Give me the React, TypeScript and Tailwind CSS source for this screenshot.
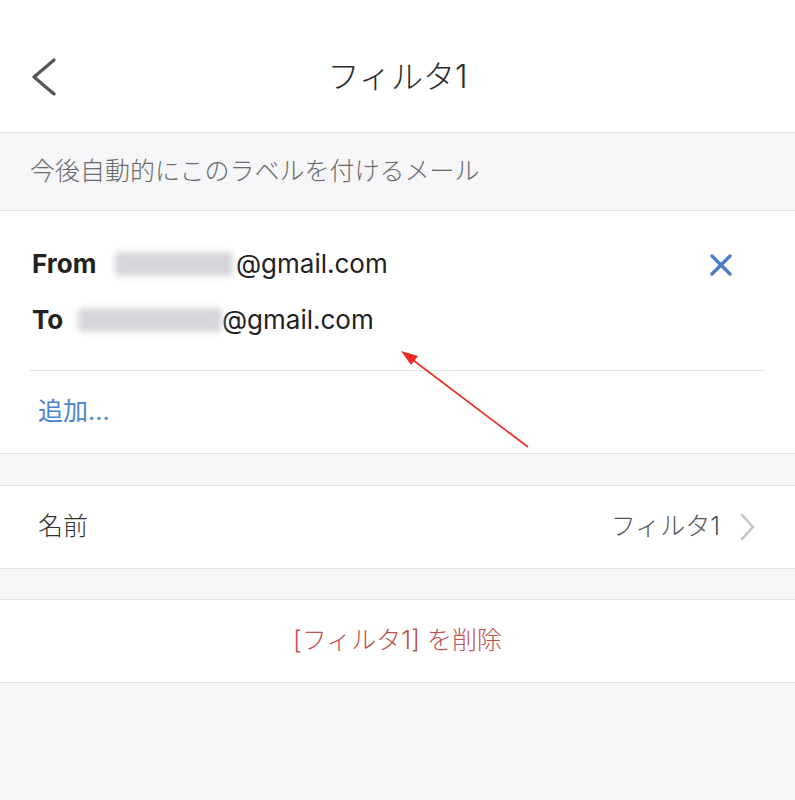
import { X } from "lucide-react";

const font = { fontFamily: '"Inter", "Noto Sans CJK JP", sans-serif' };

function Blurred({ width }: { width: string }) {
  return (
    <span className={`inline-block h-[24px] ${width} rounded-sm bg-[#d6d6da] blur-[3px]`} />
  );
}

export default function App() {
  return (
    <div className="relative min-h-screen w-full bg-[#f6f6f8] text-[#222]" style={font}>
      {/* Nav bar */}
      <header className="box-border grid h-[133px] grid-cols-[100px_1fr_100px] items-center border-b border-[#e2e2e4] bg-white">
        <div className="pl-[30px] pt-[24px]">
          <svg width="28" height="40" viewBox="0 0 28 40" fill="none">
            <polyline points="24,2 4,19 24,36" stroke="#555" strokeWidth="3.2" strokeLinecap="round" strokeLinejoin="round" />
          </svg>
        </div>
        <h1 className="pt-[22px] text-center text-[32px] font-light text-[#2a2a2a]">フィルタ1</h1>
        <div />
      </header>

      {/* Section label */}
      <div className="flex h-[77px] items-center px-[30px] text-[25px] font-light text-[#6b6b6b]">
        今後自動的にこのラベルを付けるメール
      </div>

      {/* Filter criteria */}
      <section className="box-border h-[244px] border-y border-[#e2e2e4] bg-white">
        <div className="flex items-start justify-between pl-[32px] pr-[56px] pt-[37px]">
          <div className="flex flex-col gap-[24px] text-[26px] leading-[32px] text-[#222]">
            <div className="flex items-center">
              <span className="w-[83px] font-bold">From</span>
              <Blurred width="w-[118px]" />
              <span className="ml-[3px]">@gmail.com</span>
            </div>
            <div className="flex items-center">
              <span className="w-[46px] font-bold">To</span>
              <Blurred width="w-[144px]" />
              <span>@gmail.com</span>
            </div>
          </div>
          <X className="mt-[-1px] h-[36px] w-[36px] text-[#4a7bc6]" strokeWidth={2.2} />
        </div>
        <div className="mx-[30px] mt-[34px] border-t border-[#e2e2e4]" />
        <div className="flex h-[82px] items-center px-[38px] text-[25px] text-[#4a86d0]">
          追加...
        </div>
      </section>

      <div className="h-[31px]" />

      {/* Name row */}
      <section className="box-border flex h-[84px] items-center justify-between border-y border-[#e2e2e4] bg-white pl-[38px] pr-[40px] text-[25px] font-light">
        <span className="text-[#333]">名前</span>
        <span className="flex items-center gap-[19px] text-[#555]">
          フィルタ1
          <svg width="16" height="28" viewBox="0 0 16 28" fill="none">
            <polyline points="3,2 14,14 3,26" stroke="#c4c4c8" strokeWidth="2.4" strokeLinecap="round" strokeLinejoin="round" />
          </svg>
        </span>
      </section>

      <div className="h-[30px]" />

      {/* Delete */}
      <section className="box-border flex h-[84px] items-center justify-center border-y border-[#e2e2e4] bg-white text-[25px] font-light text-[#c0504d]">
        [フィルタ1] を削除
      </section>

      {/* Annotation arrow */}
      <svg className="pointer-events-none absolute left-0 top-0" width="795" height="800">
        <line x1="528" y1="447" x2="409" y2="357" stroke="#ee2a24" strokeWidth="1.6" />
        <polygon points="401,351 418,356 411,365" fill="#ee2a24" />
      </svg>
    </div>
  );
}
